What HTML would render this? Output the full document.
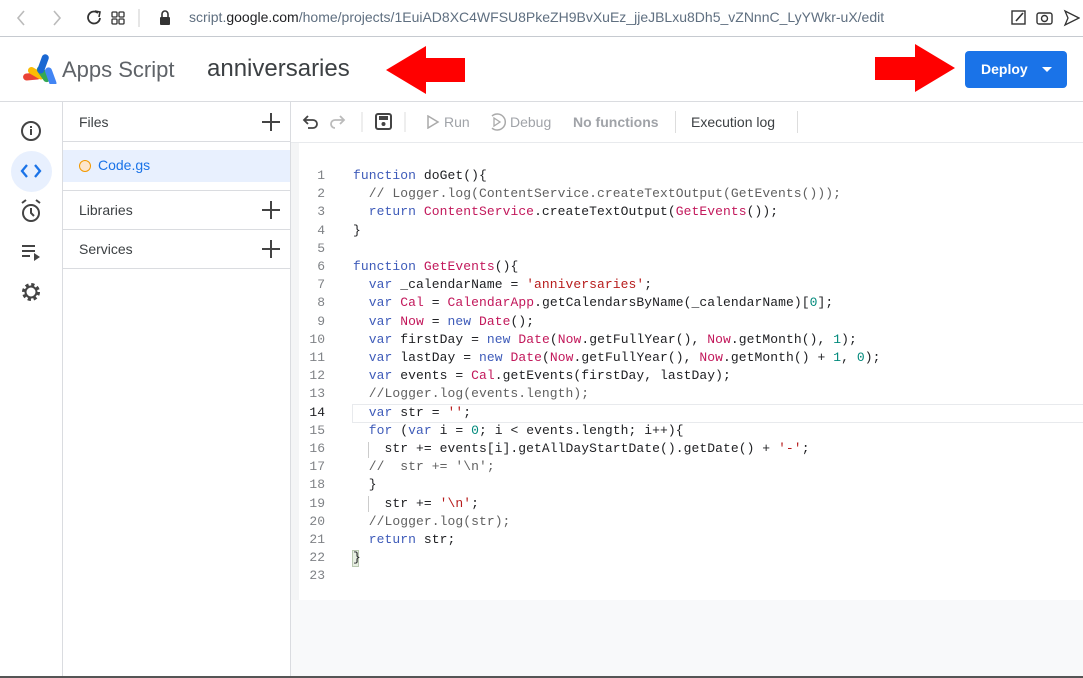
<!DOCTYPE html>
<html><head><meta charset="utf-8"><style>
*{box-sizing:border-box;margin:0;padding:0}
body{width:1083px;height:678px;overflow:hidden;background:#fff;font-family:"Liberation Sans",sans-serif;position:relative;color:#3c4043}
.abs{position:absolute}
.code{position:absolute;left:300px;top:167px;font-family:"Liberation Mono","DejaVu Sans Mono",monospace;font-size:13px;line-height:18.2px;white-space:pre;color:#202124;letter-spacing:0.07px}
.ln{display:inline-block;width:25px;text-align:right;color:#7f8286;margin-right:28px;letter-spacing:0}
.k{color:#3e5bb9}.f{color:#c2185b}.s{color:#b71c1c}.c{color:#616161}.n{color:#00897b}
.plus{position:absolute;width:18px;height:18px}
.plus:before{content:"";position:absolute;left:8px;top:0;width:2px;height:18px;background:#444}
.plus:after{content:"";position:absolute;left:0;top:8px;width:18px;height:2px;background:#444}
</style></head><body>
<div class="abs" style="left:0;top:0;width:1083px;height:37px;border-bottom:1px solid #c6cad0;background:#fff"></div>
<svg class="abs" style="left:10px;top:8px" width="200" height="20" viewBox="0 0 200 20">
<path d="M14 3 L8 10 L14 17" stroke="#bbb" stroke-width="1.6" fill="none"/>
<path d="M44 3 L50 10 L44 17" stroke="#bbb" stroke-width="1.6" fill="none"/>
<path d="M88 5 A6 6 0 1 0 90 10" stroke="#333" stroke-width="1.8" fill="none"/><path d="M85 3 L90 4 L89 9" stroke="#333" stroke-width="1.6" fill="none"/>
<rect x="102" y="4" width="5" height="5" rx="1" stroke="#333" fill="none" stroke-width="1.3"/><rect x="109" y="4" width="5" height="5" rx="1" stroke="#333" fill="none" stroke-width="1.3"/><rect x="102" y="11" width="5" height="5" rx="1" stroke="#333" fill="none" stroke-width="1.3"/><rect x="109" y="11" width="5" height="5" rx="1" stroke="#333" fill="none" stroke-width="1.3"/>
<line x1="129" y1="1" x2="129" y2="19" stroke="#ccc"/>
<rect x="150" y="9" width="10" height="8" rx="1" fill="#333"/><path d="M152 9 V6 a3 3 0 0 1 6 0 V9" stroke="#333" stroke-width="1.6" fill="none"/>
</svg>
<div class="abs" style="left:189px;top:9px;font-size:14px;color:#5f6f80;white-space:nowrap">script.<span style="color:#202124">google.com</span>/home/projects/1EuiAD8XC4WFSU8PkeZH9BvXuEz_jjeJBLxu8Dh5_vZNnnC_LyYWkr-uX/edit</div>
<svg class="abs" style="left:1010px;top:8px" width="70" height="20"><rect x="2" y="3" width="13" height="13" stroke="#333" fill="none" stroke-width="1.4"/><path d="M6 13 L13 5" stroke="#333" stroke-width="1.6"/><rect x="27" y="5" width="15" height="11" rx="2" stroke="#333" fill="none" stroke-width="1.4"/><circle cx="34.5" cy="10.5" r="3" stroke="#333" fill="none" stroke-width="1.4"/><path d="M55 3 L69 10 L55 17 L58 10 Z" stroke="#333" fill="none" stroke-width="1.3"/></svg>
<div class="abs" style="left:0;top:101px;width:1083px;height:1px;background:#dadce0"></div>
<svg class="abs" style="left:22px;top:54px" width="36" height="30" viewBox="0 0 36 30">
<rect x="1" y="19" width="18" height="7" rx="3.5" fill="#ea4335" transform="rotate(-5 10 22)"/>
<rect x="3" y="13" width="18" height="7" rx="3.5" fill="#fbbc04" transform="rotate(30 8 22)"/>
<rect x="6" y="8" width="18" height="7" rx="3.5" fill="#34a853" transform="rotate(55 10 22)"/>
<rect x="10" y="5" width="20" height="7" rx="3.5" fill="#4285f4" transform="rotate(70 14 22)"/>
<rect x="15" y="5" width="20" height="7" rx="3.5" fill="#1967d2" transform="rotate(-70 24 12)"/>
</svg>
<div class="abs" style="left:62px;top:57px;font-size:22px;color:#5f6368">Apps Script</div>
<div class="abs" style="left:207px;top:55px;font-size:24px;color:#3c4043">anniversaries</div>
<svg class="abs" style="left:380px;top:40px" width="90" height="60"><polygon points="6,30 46,6 46,18 85,18 85,42 46,42 46,54" fill="#f00"/></svg>
<svg class="abs" style="left:870px;top:40px" width="90" height="60"><polygon points="5,17 45,17 45,4 85,28 45,52 45,40 5,40" fill="#f00"/></svg>
<div class="abs" style="left:965px;top:51px;width:102px;height:37px;border-radius:4px;background:#1a73e8;color:#fff;font-weight:bold;font-size:14px;line-height:37px;padding-left:16px">Deploy<span style="position:absolute;left:77px;top:16px;border-left:5px solid transparent;border-right:5px solid transparent;border-top:5px solid #fff"></span></div>
<div class="abs" style="left:62px;top:102px;width:1px;height:576px;background:#dadce0"></div>
<div class="abs" style="left:290px;top:102px;width:1px;height:576px;background:#dadce0"></div>
<div class="abs" style="left:11px;top:151px;width:41px;height:41px;border-radius:50%;background:#e8f0fe"></div>
<svg class="abs" style="left:18px;top:118px" width="30" height="190">
<circle cx="13" cy="13" r="9" stroke="#444" stroke-width="2" fill="none"/><rect x="12" y="11" width="2" height="6" fill="#444"/><rect x="12" y="8" width="2" height="2" fill="#444"/>
<path d="M9 47 L4 53 L9 59 M17 47 L22 53 L17 59" stroke="#1a73e8" stroke-width="2.3" fill="none"/>
<circle cx="13" cy="95" r="8" stroke="#444" stroke-width="2" fill="none"/><path d="M13 90 V95 L16 98" stroke="#444" stroke-width="2" fill="none"/><path d="M4 85 L8 82 M22 85 L18 82" stroke="#444" stroke-width="2"/>
<path d="M4 128 H17 M4 133 H17 M4 138 H12" stroke="#444" stroke-width="2"/><polygon points="16,135 22,139 16,143" fill="#444"/>
<circle cx="13" cy="174" r="7" stroke="#444" stroke-width="4" fill="none" stroke-dasharray="3 2.5"/><circle cx="13" cy="174" r="5.5" stroke="#444" stroke-width="2" fill="none"/>
</svg>
<div class="abs" style="left:79px;top:114px;font-size:14px;color:#3c4043">Files</div>
<div class="plus" style="left:262px;top:113px"></div>
<div class="abs" style="left:63px;top:141px;width:227px;height:1px;background:#dadce0"></div>
<div class="abs" style="left:63px;top:150px;width:227px;height:32px;background:#e8f0fe"></div>
<div class="abs" style="left:79px;top:160px;width:12px;height:12px;border-radius:50%;border:1.5px solid #f29900;background:#fde6cc"></div>
<div class="abs" style="left:98px;top:157px;font-size:14px;color:#1a73e8">Code.gs</div>
<div class="abs" style="left:63px;top:190px;width:227px;height:1px;background:#dadce0"></div>
<div class="abs" style="left:79px;top:202px;font-size:14px">Libraries</div>
<div class="plus" style="left:262px;top:201px"></div>
<div class="abs" style="left:63px;top:229px;width:227px;height:1px;background:#dadce0"></div>
<div class="abs" style="left:79px;top:241px;font-size:14px">Services</div>
<div class="plus" style="left:262px;top:240px"></div>
<div class="abs" style="left:63px;top:268px;width:227px;height:1px;background:#dadce0"></div>
<div class="abs" style="left:291px;top:142px;width:792px;height:1px;background:#e8eaed"></div>
<svg class="abs" style="left:300px;top:110px" width="110" height="24">
<path d="M8 6 L4 10 L8 14 M4 10 H13 a4 4 0 0 1 0 8 H8" stroke="#444" stroke-width="1.8" fill="none"/>
<path d="M40 6 L44 10 L40 14 M44 10 H35 a4 4 0 0 0 0 8" stroke="#bbb" stroke-width="1.8" fill="none"/>
<line x1="62" y1="2" x2="62" y2="22" stroke="#ddd"/>
<rect x="76" y="4" width="15" height="15" rx="2" stroke="#444" stroke-width="2" fill="none"/><rect x="79" y="6" width="9" height="4" fill="#444"/><circle cx="83.5" cy="14" r="2" fill="#444"/>
<line x1="105" y1="2" x2="105" y2="22" stroke="#ddd"/>
</svg>
<svg class="abs" style="left:426px;top:115px" width="14" height="14"><polygon points="2,1 12,7 2,13" stroke="#aaa" fill="none" stroke-width="1.5"/></svg>
<div class="abs" style="left:444px;top:114px;font-size:14px;color:#a0a3a8">Run</div>
<svg class="abs" style="left:488px;top:113px" width="18" height="18"><path d="M4 3 A8 8 0 1 1 4 15" stroke="#aaa" fill="none" stroke-width="1.5"/><polygon points="6,5 12,9 6,13" stroke="#aaa" fill="none" stroke-width="1.3"/></svg>
<div class="abs" style="left:510px;top:114px;font-size:14px;color:#a0a3a8">Debug</div>
<div class="abs" style="left:573px;top:114px;font-size:14px;color:#a0a3a8;font-weight:bold">No functions</div>
<div class="abs" style="left:675px;top:111px;width:1px;height:22px;background:#ddd"></div>
<div class="abs" style="left:691px;top:114px;font-size:14px;color:#3c4043">Execution log</div>
<div class="abs" style="left:797px;top:111px;width:1px;height:22px;background:#ddd"></div>
<div class="abs" style="left:291px;top:143px;width:8px;height:460px;background:#f4f5f6"></div>
<div class="abs" style="left:291px;top:600px;width:792px;height:76px;background:#f8f9fa"></div>
<div class="abs" style="left:352px;top:404px;width:731px;height:19px;border:1px solid #e8eaed;border-right:none"></div>
<div class="abs" style="left:352px;top:550px;width:7px;height:17px;border:1px solid #b9c8b0;background:#e7efe2"></div>
<div class="abs" style="left:368px;top:442px;width:1px;height:16px;background:#ccc"></div>
<div class="abs" style="left:368px;top:496px;width:1px;height:16px;background:#ccc"></div>
<div class="code"><span class="ln">1</span><span class="k">function</span> doGet(){
<span class="ln">2</span>  <span class="c">// Logger.log(ContentService.createTextOutput(GetEvents()));</span>
<span class="ln">3</span>  <span class="k">return</span> <span class="f">ContentService</span>.createTextOutput(<span class="f">GetEvents</span>());
<span class="ln">4</span>}
<span class="ln">5</span>
<span class="ln">6</span><span class="k">function</span> <span class="f">GetEvents</span>(){
<span class="ln">7</span>  <span class="k">var</span> _calendarName = <span class="s">'anniversaries'</span>;
<span class="ln">8</span>  <span class="k">var</span> <span class="f">Cal</span> = <span class="f">CalendarApp</span>.getCalendarsByName(_calendarName)[<span class="n">0</span>];
<span class="ln">9</span>  <span class="k">var</span> <span class="f">Now</span> = <span class="k">new</span> <span class="f">Date</span>();
<span class="ln">10</span>  <span class="k">var</span> firstDay = <span class="k">new</span> <span class="f">Date</span>(<span class="f">Now</span>.getFullYear(), <span class="f">Now</span>.getMonth(), <span class="n">1</span>);
<span class="ln">11</span>  <span class="k">var</span> lastDay = <span class="k">new</span> <span class="f">Date</span>(<span class="f">Now</span>.getFullYear(), <span class="f">Now</span>.getMonth() + <span class="n">1</span>, <span class="n">0</span>);
<span class="ln">12</span>  <span class="k">var</span> events = <span class="f">Cal</span>.getEvents(firstDay, lastDay);
<span class="ln">13</span>  <span class="c">//Logger.log(events.length);</span>
<span class="ln" style="color:#202124">14</span>  <span class="k">var</span> str = <span class="s">''</span>;
<span class="ln">15</span>  <span class="k">for</span> (<span class="k">var</span> i = <span class="n">0</span>; i &lt; events.length; i++){
<span class="ln">16</span>    str += events[i].getAllDayStartDate().getDate() + <span class="s">'-'</span>;
<span class="ln">17</span>  <span class="c">//  str += '\n';</span>
<span class="ln">18</span>  }
<span class="ln">19</span>    str += <span class="s">'\n'</span>;
<span class="ln">20</span>  <span class="c">//Logger.log(str);</span>
<span class="ln">21</span>  <span class="k">return</span> str;
<span class="ln">22</span>}
<span class="ln">23</span></div>
<div class="abs" style="left:0;top:676px;width:1083px;height:2px;background:#555"></div>
</body></html>
